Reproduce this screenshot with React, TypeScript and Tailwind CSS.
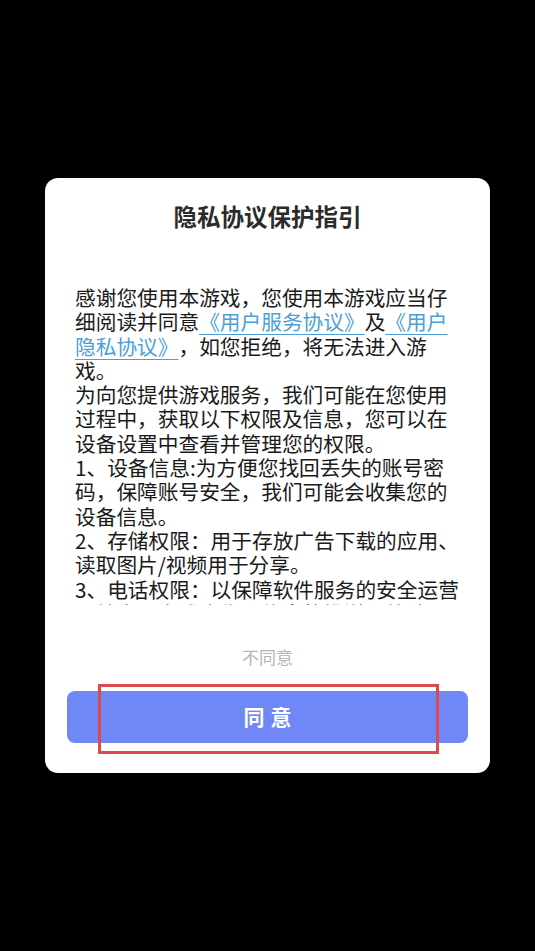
export default function App() {
  return (
    <div className="w-full h-[951px] bg-black overflow-hidden font-['Noto_Sans_CJK_SC','Noto_Sans',sans-serif] [text-spacing-trim:space-all]">
      <div className="mt-[178px] mx-[45px] w-[445px] bg-white rounded-[13px] flex flex-col items-center pt-[23px] pb-[30px]">
        {/* Title */}
        <h1 className="text-[23.5px] leading-[30px] font-bold text-[#2b2b2b]">隐私协议保护指引</h1>

        {/* Scrollable agreement body, clipped */}
        <div className="mt-[54px] self-start ml-[30px] w-[388px] h-[320px] overflow-hidden text-[20.7px] leading-[24.3px] text-[#1a1a1a]">
          <p>
            感谢您使用本游戏，您使用本游戏应当仔细阅读并同意
            <span className="text-[#4c9fd6] underline underline-offset-[4px] decoration-1">《用户服务协议》</span>
            及
            <span className="text-[#4c9fd6] underline underline-offset-[4px] decoration-1">《用户隐私协议》</span>
            ，如您拒绝，将无法进入游戏。
          </p>
          <p>为向您提供游戏服务，我们可能在您使用过程中，获取以下权限及信息，您可以在设备设置中查看并管理您的权限。</p>
          <p>1、设备信息:为方便您找回丢失的账号密码，保障账号安全，我们可能会收集您的设备信息。</p>
          <p>2、存储权限：用于存放广告下载的应用、读取图片/视频用于分享。</p>
          <p>3、电话权限：以保障软件服务的安全运营及效率，完成广告和信息的推送和统计。</p>
        </div>

        {/* Decline */}
        <div className="mt-[40px] text-[17px] leading-[24px] text-[#b5b5b5]">不同意</div>

        {/* Agree button */}
        <div className="relative mt-[22px] w-[401px]">
          <button className="w-full h-[52px] rounded-[8px] bg-[#6f88f6] flex items-center justify-center gap-[6px] text-white text-[21px] font-bold">
            <span>同</span>
            <span>意</span>
          </button>
          <div className="absolute left-[31px] top-[-7px] w-[341px] h-[70px] border-[3px] border-[#dc4a4f] pointer-events-none"></div>
        </div>
      </div>
    </div>
  )
}
